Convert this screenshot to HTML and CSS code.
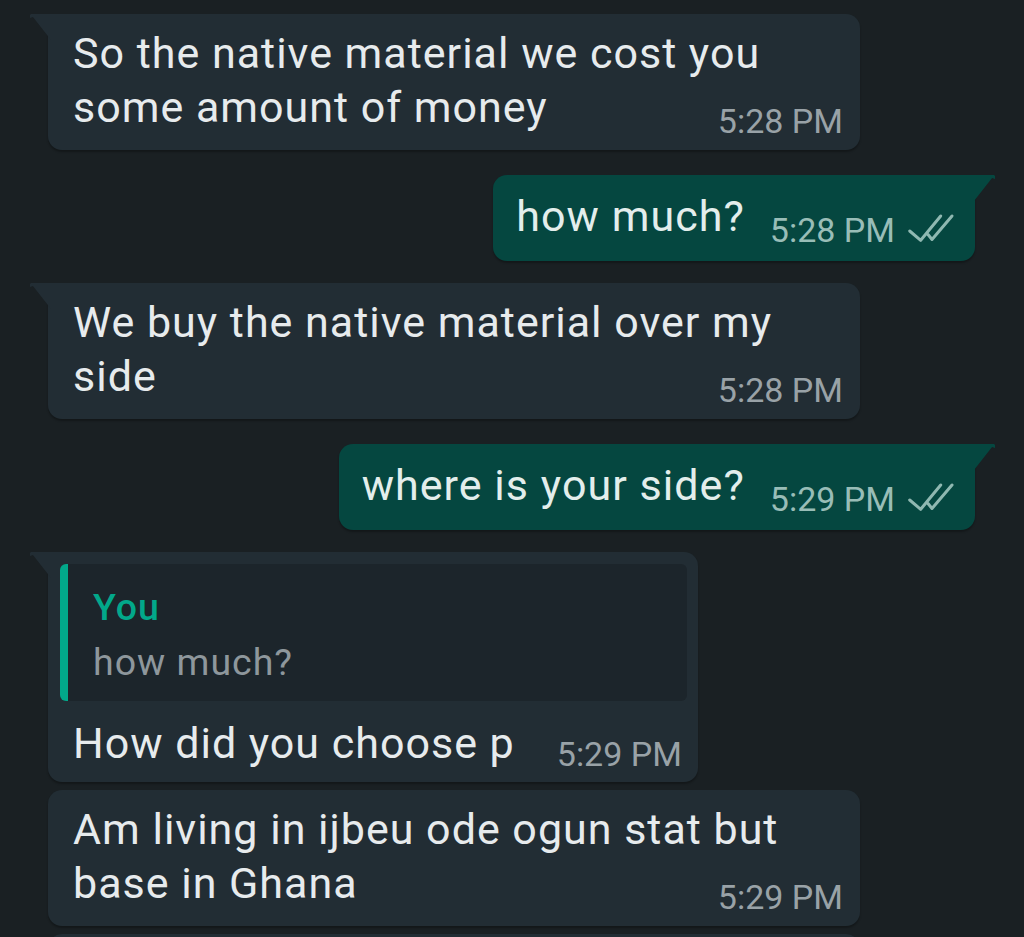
FILE: index.html
```html
<!DOCTYPE html>
<html lang="en">
<head>
<meta charset="utf-8">
<title>Chat</title>
<link rel="stylesheet" href="styles.css">
</head>
<body>
<main class="chat">
  <div class="row in">
    <div class="bubble in tail">
      <p class="text">So the native material we cost you some amount of money</p>
      <div class="meta"><span class="time">5:28 PM</span></div>
    </div>
  </div>

  <div class="row out">
    <div class="bubble out tail inline">
      <p class="text">how much?</p>
      <div class="meta"><span class="time">5:28 PM</span>
        <svg class="ticks" viewBox="0 0 50 30" aria-hidden="true"><path d="M4.7 18 L15.7 27.3 L35.7 3 M23 21.5 L27 26.5 L47 3"/></svg>
      </div>
    </div>
  </div>

  <div class="row in">
    <div class="bubble in tail">
      <p class="text">We buy the native material over my side</p>
      <div class="meta"><span class="time">5:28 PM</span></div>
    </div>
  </div>

  <div class="row out">
    <div class="bubble out tail inline">
      <p class="text">where is your side?</p>
      <div class="meta"><span class="time">5:29 PM</span>
        <svg class="ticks" viewBox="0 0 50 30" aria-hidden="true"><path d="M4.7 18 L15.7 27.3 L35.7 3 M23 21.5 L27 26.5 L47 3"/></svg>
      </div>
    </div>
  </div>

  <div class="row in">
    <div class="bubble in tail quoted">
      <div class="quote">
        <div class="quote-author">You</div>
        <div class="quote-text">how much?</div>
      </div>
      <div class="inline-row">
        <p class="text">How did you choose p</p>
        <div class="meta"><span class="time">5:29 PM</span></div>
      </div>
    </div>
  </div>

  <div class="row in cont">
    <div class="bubble in">
      <p class="text">Am living in ijbeu ode ogun stat but base in Ghana</p>
      <div class="meta"><span class="time">5:29 PM</span></div>
    </div>
  </div>

  <div class="row in cont">
    <div class="bubble in stub"></div>
  </div>
</main>
</body>
</html>
```

FILE: styles.css
```css
html, body {
  margin: 0;
  padding: 0;
  height: 100%;
  overflow: hidden;
  background: #1a2023;
}

body {
  font-family: Roboto, "Noto Sans", "Liberation Sans", sans-serif;
  color: #e7ebed;
}

.chat {
  display: flex;
  flex-direction: column;
  padding: 14px 49px 0 48px;
}

.row {
  display: flex;
}

.row.in { justify-content: flex-start; }
.row.out { justify-content: flex-end; margin-top: 25px; }
.row.in + .row.in.cont { margin-top: 8px; }
.row.out + .row.in { margin-top: 22px; }

.bubble {
  position: relative;
  max-width: 812px;
  box-sizing: border-box;
  border-radius: 14px;
  padding: 12px 17px 9px 25px;
  box-shadow: 0 2px 2px rgba(0, 0, 0, 0.28);
}

.bubble.in { background: #222d34; }
.bubble.out {
  background: #054740;
  color: #e3eeec;
  padding: 14px 20px 11px 23px;
}

.bubble.tail.in { border-top-left-radius: 0; }
.bubble.tail.out { border-top-right-radius: 0; }

.bubble.tail::before {
  content: "";
  position: absolute;
  top: 0;
  width: 21px;
  height: 26px;
}

.bubble.tail.in::before {
  left: -18px;
  background: #222d34;
  clip-path: polygon(0 1px, 1px 0, 100% 0, 100% 100%, 14% 12%, 0 4px);
}

.bubble.tail.out::before {
  right: -20px;
  background: #054740;
  clip-path: polygon(0 0, calc(100% - 1px) 0, 100% 1px, 100% 4px, 86% 12%, 0 100%);
}

.text {
  margin: 0;
  font-size: 43px;
  letter-spacing: 1px;
  line-height: 54px;
}

.meta {
  display: flex;
  justify-content: flex-end;
  align-items: center;
  margin-top: -33px;
  line-height: 40px;
  font-size: 34px;
  color: #99a2a7;
  white-space: nowrap;
}

.bubble.inline {
  display: flex;
  align-items: flex-end;
  gap: 25px;
}

.bubble.inline .text { padding-bottom: 7px; white-space: nowrap; letter-spacing: 1.05px; }
.bubble.inline .meta { margin-top: 0; color: #99bdb7; gap: 10px; }

.ticks {
  width: 50px;
  height: 30px;
  margin-top: -4px;
  fill: none;
  stroke: #8fb8b1;
  stroke-width: 3;
  stroke-linecap: round;
  stroke-linejoin: round;
}

.bubble.quoted {
  padding: 12px 11px 8px 12px;
}

.quote {
  background: #1c252b;
  border-left: 8px solid #02a88a;
  border-radius: 6px;
  padding: 16px 20px 11px 25px;
  font-size: 37.5px;
  letter-spacing: 1px;
  line-height: 55px;
}

.quote-author {
  color: #02a88a;
  font-weight: 500;
}

.quote-text {
  color: #8e979c;
}

.inline-row {
  display: flex;
  align-items: flex-end;
  gap: 42px;
  padding: 15px 5px 0 13px;
}

.inline-row .text { padding-bottom: 4px; white-space: nowrap; }
.inline-row .meta { margin-top: 0; }

.bubble.stub {
  width: 814px;
  height: 120px;
}
```
